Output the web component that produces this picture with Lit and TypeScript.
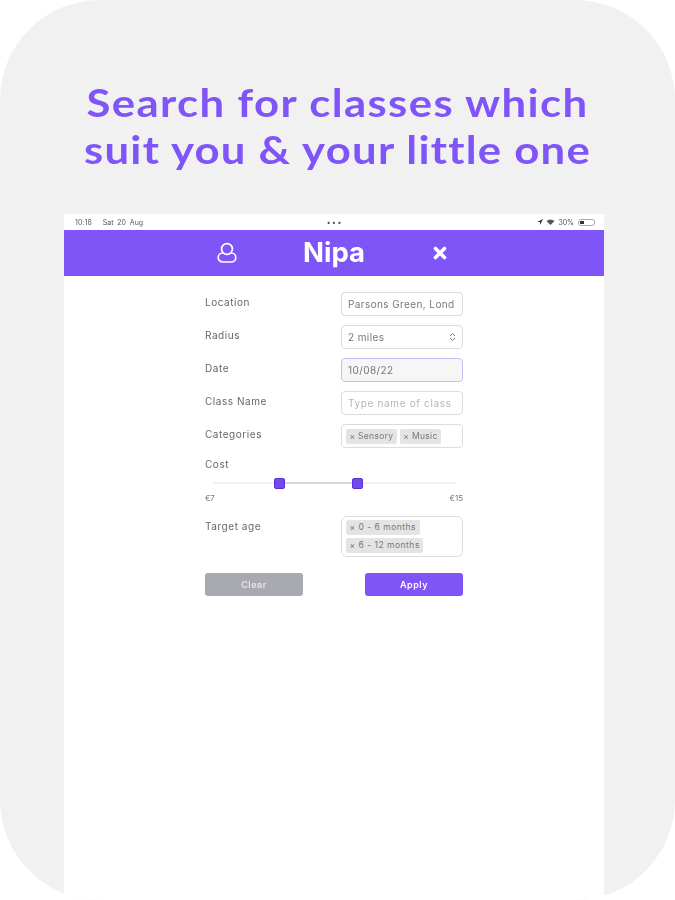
import { LitElement, html, css } from "lit";
import { customElement } from "lit/decorators.js";

@customElement("app-root")
export class AppRoot extends LitElement {
  static styles = css`
    :host { display: block; width: 675px; height: 900px; background: #fff; overflow: hidden; font-family: Inter, "Liberation Sans", sans-serif; }
    .panel { height: 900px; box-sizing: border-box; background: #f1f1f2; border-radius: 100px; overflow: hidden; display: flex; flex-direction: column; align-items: center; padding-top: 79px; }
    h1 { margin: 0; width: 100%; text-align: center; color: #7f55f8; font: 700 39px/47px Lato, sans-serif; filter: blur(0.5px); white-space: nowrap; }
    h1 span { display: block; transform: scaleX(1.12); }
    .l1 { letter-spacing: 1.24px; }
    .l2 { letter-spacing: 1.1px; }
    .tablet { align-self: stretch; margin: 41px 71px 0 64px; flex: 1; background: #fff; display: flex; flex-direction: column; }
    .status { height: 16px; display: grid; grid-template-columns: 1fr auto 1fr; align-items: center; padding: 0 9px 0 11px; font-size: 7px; color: #555; filter: blur(0.35px); }
    .status .left { word-spacing: 1.5px; letter-spacing: 0.1px; white-space: pre; }
    .dots { letter-spacing: 2px; font-weight: 700; font-size: 7px; }
    .right { display: flex; justify-content: flex-end; align-items: center; gap: 3px; }
    .bat { width: 17px; height: 7px; border: 1px solid #aaa; border-radius: 3px; box-sizing: border-box; padding: 1px; margin-left: 1px; }
    .bat i { display: block; width: 4px; height: 100%; background: #333; }
    .bar { height: 45.5px; background: #7f55f8; color: #fff; display: flex; align-items: center; padding-left: 153px; filter: blur(0.25px); }
    .bar svg { display: block; flex: none; }
    .brand { font: 700 27.5px/1 Inter, sans-serif; width: 64px; margin-left: 65px; text-align: center; white-space: nowrap; }
    .x { margin-left: 67px; }
    form { width: 258px; margin: 16.5px 0 0 141px; display: flex; flex-direction: column; font-size: 10px; color: #666; filter: blur(0.4px); }
    .row { display: flex; justify-content: space-between; align-items: flex-start; min-height: 24px; margin-bottom: 9px; }
    .row > label { padding-top: 4px; letter-spacing: 0.55px; }
    .field { width: 122px; height: 24px; box-sizing: border-box; border: 1px solid #dcdcdf; border-radius: 4px; display: flex; align-items: center; padding: 0 6px; color: #777; white-space: nowrap; overflow: hidden; letter-spacing: 0.4px; justify-content: space-between; background: #fff; }
    .focus { border-color: #c8bcf6; background: #f6f6f7; }
    .ph { color: #b5b5b8; letter-spacing: 0.65px; }
    .tags { padding: 0 4px; justify-content: flex-start; gap: 3px; letter-spacing: 0.3px; }
    .tag { background: #e4e4e5; border-radius: 2px; padding: 0 3.5px; height: 15px; line-height: 15px; font-size: 8.5px; display: block; }
    .cost { margin-bottom: 2px; padding-top: 1px; letter-spacing: 0.55px; }
    .slider { position: relative; height: 12px; margin: 5px 7px 0 8px; display: flex; align-items: center; }
    .track { flex: 1; height: 2px; background: #f1f1f4; }
    .fill { position: absolute; top: 5px; height: 2px; left: 67px; width: 77px; background: #d8d8db; }
    .thumb { position: absolute; top: 1px; width: 11px; height: 11px; box-sizing: border-box; background: #7448ef; border: 1px solid #5a2fd8; border-radius: 2px; }
    .ends { display: flex; justify-content: space-between; font-size: 8px; margin-top: 4px; margin-bottom: 13px; color: #777; }
    .tall { height: 41px; flex-wrap: wrap; align-content: center; gap: 3px; border-radius: 6px; }
    .tall .tag { height: 15px; letter-spacing: 0.5px; }
    .buttons { display: flex; justify-content: space-between; margin-top: 7px; }
    .btn { width: 98px; height: 23px; border: 0; border-radius: 3px; color: #fff; font: 600 9px/23px Inter, sans-serif; letter-spacing: 0.5px; text-align: center; display: block; }
    .clear { background: #a9a9b2; color: #e4e4e8; }
    .apply { background: #7f55f8; }
  `;

  render() {
    return html`
      <div class="panel">
        <h1><span class="l1">Search for classes which</span><span class="l2">suit you &amp; your little one</span></h1>
        <div class="tablet">
          <div class="status">
            <span class="left">10:18   Sat 20 Aug</span>
            <span class="dots">•••</span>
            <span class="right">
              <svg width="6" height="6" viewBox="0 0 6 6"><path d="M6 0 0 3h3v3z" fill="#333"/></svg>
              <svg width="9" height="6" viewBox="0 0 8 6"><path d="M0 2a6 6 0 0 1 8 0L4 6z" fill="#555"/></svg>
              <span>30%</span>
              <span class="bat"><i></i></span>
            </span>
          </div>
          <div class="bar">
            <svg width="20" height="22" viewBox="0 0 20 22" fill="none" stroke="#fff" stroke-width="1.7">
              <rect x="1.2" y="11" width="17.6" height="9" rx="4.5"/>
              <circle cx="10" cy="7" r="5.4" fill="#7f55f8"/>
            </svg>
            <span class="brand">Nipa</span>
            <svg class="x" width="14" height="14" viewBox="0 0 14 14" stroke="#fff" stroke-width="3.6" stroke-linecap="round"><path d="M2.5 2.5 11.5 11.5M11.5 2.5 2.5 11.5"/></svg>
          </div>
          <form>
            <div class="row"><label>Location</label><div class="field">Parsons Green, Lond</div></div>
            <div class="row"><label>Radius</label><div class="field"><span>2 miles</span>
              <svg width="7" height="10" viewBox="0 0 7 10" fill="none" stroke="#777" stroke-width="1"><path d="M1 4 3.5 1.5 6 4M1 6 3.5 8.5 6 6"/></svg></div></div>
            <div class="row"><label>Date</label><div class="field focus">10/08/22</div></div>
            <div class="row"><label>Class Name</label><div class="field ph">Type name of class</div></div>
            <div class="row"><label>Categories</label><div class="field tags"><span class="tag">× Sensory</span><span class="tag">× Music</span></div></div>
            <div class="cost">Cost</div>
            <div class="slider">
              <div class="track"></div>
              <div class="fill"></div>
              <div class="thumb" style="left: 61px"></div>
              <div class="thumb" style="left: 139px"></div>
            </div>
            <div class="ends"><span>€7</span><span>€15</span></div>
            <div class="row"><label>Target age</label><div class="field tags tall"><span class="tag">× 0 - 6 months</span><span class="tag">× 6 - 12 months</span></div></div>
            <div class="buttons"><span class="btn clear">Clear</span><span class="btn apply">Apply</span></div>
          </form>
        </div>
      </div>
    `;
  }
}
